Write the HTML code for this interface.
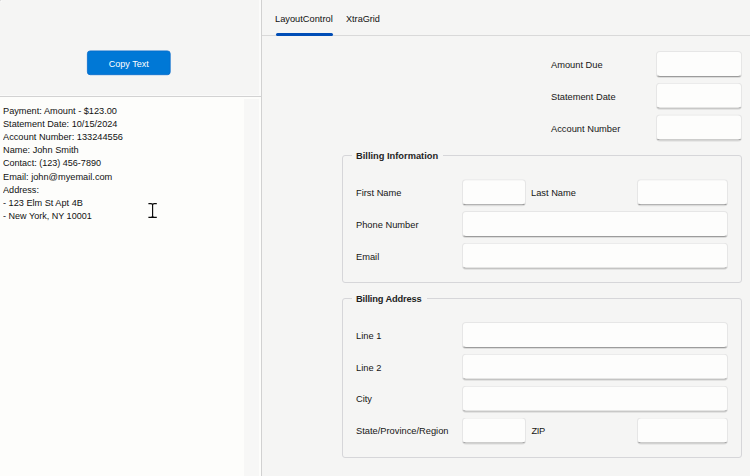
<!DOCTYPE html>
<html lang="en">
<head>
<meta charset="utf-8">
<title>Copy Text - LayoutControl</title>
<style>
*{box-sizing:border-box;margin:0;padding:0}
html,body{width:750px;height:476px;overflow:hidden;background:#f5f5f4}
body{position:relative;font-family:"Liberation Sans",Arial,sans-serif;font-size:9.3px;color:#1e1e1e}
.abs{position:absolute}
/* left panel */
#leftTop{left:0;top:0;width:261px;height:97px;background:#f5f5f4}
#btnbg{left:80px;top:44px}
#btn{left:87px;top:57.5px;width:83.6px;color:#fff;text-align:center;line-height:12px;font-size:9.3px;transform:scaleX(.975);transform-origin:50% 0}
#hsep{left:0;top:95px;width:261px;height:2px;background:linear-gradient(rgba(255,255,255,.5) 50%,#d2d2d2 50%)}
#memo{left:0;top:97px;width:261px;height:379px;background:#fdfdfb}
#memoText{left:3.3px;top:104.6px;white-space:pre;line-height:13.2px;font-size:9.3px;color:#111}
.ml{display:block;transform-origin:0 0;height:13.2px}
#sbar{left:244px;top:99px;width:15px;height:377px;background:#f7f7f6}
#vhl{left:259px;top:0;width:2px;height:95px;background:rgba(255,255,255,.55)}
#corner{left:0;top:0;width:2px;height:2px;background:linear-gradient(135deg,#dcdcdc 30%,#fcfcfc 55%,#f5f5f4 100%)}
#vsep{left:261px;top:0;width:1px;height:476px;background:#d1d1d1}
/* tabs */
#tabline{left:262px;top:35px;width:488px;height:1px;background:#d9d9d9}
#tab1{left:275.3px;top:12.5px;color:#111;font-size:9.6px;transform:scaleX(.966);transform-origin:0 0;white-space:nowrap}
#tab2{left:346.2px;top:12.5px;color:#111;font-size:9.6px;transform:scaleX(.95);transform-origin:0 0;white-space:nowrap}
#tabsel{left:276px;top:33px;width:57px;height:3px;background:#004db6;border-radius:2px}
/* form */
.lbl{position:absolute;white-space:nowrap;font-size:9.3px;line-height:12px;color:#151515}
.inp{position:absolute;height:26px;background:#fdfdfc;border:1px solid #e6e6e6;border-bottom:1px solid #9c9c9c;border-radius:4px;box-shadow:0 1px 0 rgba(0,0,0,.10)}
.grp{position:absolute;border:1px solid #d6d6d9;border-radius:3px}
.gt{position:absolute;font-weight:bold;font-size:9.3px;line-height:12px;background:#f5f5f4;white-space:nowrap;padding:0 5px 0 4px}
</style>
</head>
<body>
<div class="abs" id="leftTop"></div>
<svg class="abs" id="btnbg" width="100" height="40" viewBox="0 0 100 40"><rect x="7.4" y="6.9" width="82.8" height="23.8" rx="2.8" fill="#0078d6" stroke="#0669cc" stroke-width=".8"/></svg>
<div class="abs" id="btn">Copy Text</div>
<div class="abs" id="hsep"></div>
<div class="abs" id="memo"></div>
<div class="abs" id="sbar"></div>
<div class="abs" id="memoText"><span class="ml" style="transform:scaleX(0.989)">Payment: Amount - $123.00</span><span class="ml" style="transform:scaleX(0.984)">Statement Date: 10/15/2024</span><span class="ml" style="transform:scaleX(0.992)">Account Number: 133244556</span><span class="ml" style="transform:scaleX(0.989)">Name: John Smith</span><span class="ml" style="transform:scaleX(0.972)">Contact: (123) 456-7890</span><span class="ml" style="transform:scaleX(0.992)">Email: john@myemail.com</span><span class="ml" style="transform:scaleX(0.980)">Address:</span><span class="ml" style="transform:scaleX(0.984)">- 123 Elm St Apt 4B</span><span class="ml" style="transform:scaleX(0.972)">- New York, NY 10001</span></div>
<svg class="abs" id="ibeam" style="left:148px;top:202px" width="10" height="17" viewBox="0 0 10 17"><path d="M0.4 1.6 H3 Q4.6 1.6 4.6 3.2 Q4.6 1.6 6.2 1.6 H8.8 M4.6 3 V14 M0.4 15.4 H3 Q4.6 15.4 4.6 13.8 Q4.6 15.4 6.2 15.4 H8.8" fill="none" stroke="#0a0a0a" stroke-width="1.15"/></svg>
<div class="abs" id="vhl"></div>
<div class="abs" id="vsep"></div>
<div class="abs" id="corner"></div>

<div class="abs" id="tabline"></div>
<div class="abs" id="tab1">LayoutControl</div>
<div class="abs" id="tab2">XtraGrid</div>
<div class="abs" id="tabsel"></div>

<div class="lbl" id="l1" style="left:551px;top:58.7px">Amount Due</div>
<div class="inp" id="i1" style="left:656px;top:51px;width:86px"></div>
<div class="lbl" id="l2" style="left:551px;top:90.7px">Statement Date</div>
<div class="inp" id="i2" style="left:656px;top:83px;width:86px;transform:translateY(-0.3px)"></div>
<div class="lbl" id="l3" style="left:551px;top:122.7px">Account Number</div>
<div class="inp" id="i3" style="left:656px;top:115px;width:86px;transform:translateY(-0.6px)"></div>

<div class="grp" id="g1" style="left:342px;top:155px;width:400px;height:128px"></div>
<div class="gt" id="gt1" style="left:352px;top:149.8px">Billing Information</div>
<div class="lbl" id="l4" style="left:356px;top:186.7px">First Name</div>
<div class="inp" id="i4" style="left:462px;top:179px;width:64px;transform:translateY(0.2px)"></div>
<div class="lbl" id="l5" style="left:531px;top:186.7px">Last Name</div>
<div class="inp" id="i5" style="left:637px;top:179px;width:91px;transform:translateY(0.2px)"></div>
<div class="lbl" id="l6" style="left:356px;top:218.7px">Phone Number</div>
<div class="inp" id="i6" style="left:462px;top:211px;width:266px"></div>
<div class="lbl" id="l7" style="left:356px;top:250.7px">Email</div>
<div class="inp" id="i7" style="left:462px;top:243px;width:266px;transform:translateY(-0.2px)"></div>

<div class="grp" id="g2" style="left:342px;top:298px;width:400px;height:160px"></div>
<div class="gt" id="gt2" style="left:352px;top:292.8px;letter-spacing:-.15px">Billing Address</div>
<div class="lbl" id="l8" style="left:356px;top:329.7px">Line 1</div>
<div class="inp" id="i8" style="left:462px;top:322px;width:266px"></div>
<div class="lbl" id="l9" style="left:356px;top:361.7px">Line 2</div>
<div class="inp" id="i9" style="left:462px;top:354px;width:266px;transform:translateY(-0.2px)"></div>
<div class="lbl" id="l10" style="left:356px;top:392.9px">City</div>
<div class="inp" id="i10" style="left:462px;top:386px;width:266px;transform:translateY(-0.3px)"></div>
<div class="lbl" id="l11" style="left:356px;top:424.9px">State/Province/Region</div>
<div class="inp" id="i11" style="left:462px;top:418px;width:64px;transform:translateY(-0.4px)"></div>
<div class="lbl" id="l12" style="left:531.5px;top:424.9px;letter-spacing:-.4px">ZIP</div>
<div class="inp" id="i12" style="left:637px;top:418px;width:91px;transform:translateY(-0.4px)"></div>
</body>
</html>
